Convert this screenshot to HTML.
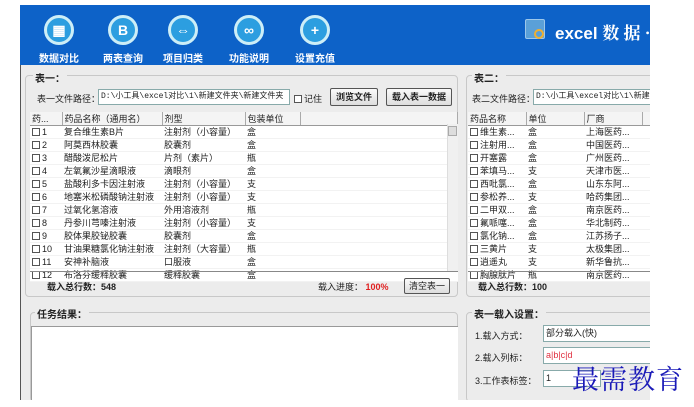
<!DOCTYPE html><html><head><meta charset="utf-8"><style>
*{margin:0;padding:0;box-sizing:border-box}
body{width:694px;height:407px;background:#fff;position:relative;overflow:hidden;font-family:"Liberation Sans","Noto Sans CJK SC",sans-serif;font-size:9px;color:#222}
.a{position:absolute}
#app{left:20px;top:5px;width:630px;height:395px;background:#ececec;border-left:1px solid #555}
#hdr{left:20px;top:5px;width:630px;height:60px;background:#0d62c8}
.ic{position:absolute;width:30px;height:30px;border-radius:50%;background:#2c9ee0;border:3px solid #cdeef7;top:10px;color:#fff;text-align:center;font:bold 14px/24px "Liberation Sans",sans-serif}
.lb{position:absolute;top:45px;color:#fff;font-size:10px;font-weight:bold;width:64px;text-align:center}
.grp{position:absolute;border:1px solid #c8c8c8;border-radius:4px}
.gt{position:absolute;background:#ececec;font-weight:bold;font-size:10px;padding:0 2px}
.inp{position:absolute;background:#fff;border:1px solid #8aa;height:16px;font:8px/14px "Liberation Mono","Noto Sans CJK SC",monospace;padding-left:2px;white-space:nowrap;overflow:hidden}
.btn{position:absolute;border:1px solid #555;background:linear-gradient(#fafafa,#ddd);font-weight:bold;font-size:9px;text-align:center;line-height:16px;height:18px;border-radius:2px}
table{border-collapse:collapse;position:absolute;background:#fff}
td{height:12.3px;line-height:12px;font-size:9px;white-space:nowrap;overflow:hidden;padding-left:2px;border-bottom:1px solid #f2f2f2}
th{height:11px;font-weight:normal;text-align:left;font-size:9px;border-right:1px solid #aaa;border-bottom:1px solid #999;padding-left:2px;background:#f4f4f4}
.cb{display:inline-block;width:8px;height:8px;border:1px solid #555;vertical-align:-1px;margin-right:2px;background:#fff}
</style></head><body>
<div id="app" class="a"></div>
<div id="hdr" class="a">
<div class="ic" style="left:24px">▦</div><div class="lb" style="left:7px">数据对比</div>
<div class="ic" style="left:88px">B</div><div class="lb" style="left:71px">两表查询</div>
<div class="ic" style="left:148px">⇔</div><div class="lb" style="left:131px">项目归类</div>
<div class="ic" style="left:214px">∞</div><div class="lb" style="left:197px">功能说明</div>
<div class="ic" style="left:280px">+</div><div class="lb" style="left:263px">设置充值</div>
<div class="a" style="left:505px;top:14px;width:20px;height:20px;background:#5aa0d8;border:1px solid #9cc7ea;border-radius:2px"></div>
<div class="a" style="left:514px;top:24px;width:10px;height:10px;border:2px solid #f0b030;border-radius:50%"></div>
<div class="a" style="left:535px;top:14px;color:#fff;font-size:17px;font-weight:bold;white-space:nowrap">excel <span style="font-family:'Noto Serif CJK SC',serif">数 据 ·</span></div>
</div>
<div class="grp" style="left:25px;top:75px;width:433px;height:222px"></div>
<div class="gt" style="left:33px;top:70px">表一：</div>
<div class="a" style="left:37px;top:92px">表一文件路径：</div>
<div class="inp" style="left:98px;top:89px;width:192px">D:\小工具\excel对比\1\新建文件夹\新建文件夹</div>
<div class="a" style="left:294px;top:92px"><span class="cb"></span>记住</div>
<div class="btn" style="left:330px;top:88px;width:48px">浏览文件</div>
<div class="btn" style="left:386px;top:88px;width:66px">载入表一数据</div>
<table style="left:30px;top:112px;width:428px">
<tr><th style="width:32px">药...</th><th style="width:100px">药品名称（通用名）</th><th style="width:83px">剂型</th><th style="width:55px">包装单位</th><th></th></tr>
<tr><td><span class="cb"></span>1</td><td>复合维生素B片</td><td>注射剂（小容量）</td><td>盒</td><td></td></tr>
<tr><td><span class="cb"></span>2</td><td>阿莫西林胶囊</td><td>胶囊剂</td><td>盒</td><td></td></tr>
<tr><td><span class="cb"></span>3</td><td>醋酸泼尼松片</td><td>片剂（素片）</td><td>瓶</td><td></td></tr>
<tr><td><span class="cb"></span>4</td><td>左氧氟沙星滴眼液</td><td>滴眼剂</td><td>盒</td><td></td></tr>
<tr><td><span class="cb"></span>5</td><td>盐酸利多卡因注射液</td><td>注射剂（小容量）</td><td>支</td><td></td></tr>
<tr><td><span class="cb"></span>6</td><td>地塞米松磷酸钠注射液</td><td>注射剂（小容量）</td><td>支</td><td></td></tr>
<tr><td><span class="cb"></span>7</td><td>过氧化氢溶液</td><td>外用溶液剂</td><td>瓶</td><td></td></tr>
<tr><td><span class="cb"></span>8</td><td>丹参川芎嗪注射液</td><td>注射剂（小容量）</td><td>支</td><td></td></tr>
<tr><td><span class="cb"></span>9</td><td>胶体果胶铋胶囊</td><td>胶囊剂</td><td>盒</td><td></td></tr>
<tr><td><span class="cb"></span>10</td><td>甘油果糖氯化钠注射液</td><td>注射剂（大容量）</td><td>瓶</td><td></td></tr>
<tr><td><span class="cb"></span>11</td><td>安神补脑液</td><td>口服液</td><td>盒</td><td></td></tr>
<tr><td><span class="cb"></span>12</td><td>布洛芬缓释胶囊</td><td>缓释胶囊</td><td>盒</td><td></td></tr>
</table>
<div class="a" style="left:447px;top:124px;width:11px;height:147px;background:#f0f0f0;border-left:1px solid #ddd"></div>
<div class="a" style="left:448px;top:126px;width:9px;height:10px;background:#ddd;border:1px solid #aaa"></div>
<div class="a" style="left:30px;top:271px;width:428px;height:1px;background:#888"></div>
<div class="a" style="left:47px;top:280px;font-weight:bold">载入总行数：548</div>
<div class="a" style="left:318px;top:280px">载入进度： <b style="color:#e02020">100%</b></div>
<div class="btn" style="left:404px;top:278px;width:46px;height:16px;line-height:14px;font-weight:normal">清空表一</div>
<div class="grp" style="left:30px;top:312px;width:428px;height:90px"></div>
<div class="gt" style="left:35px;top:306px">任务结果：</div>
<div class="a" style="left:31px;top:326px;width:427px;height:75px;background:#fff;border-top:1px solid #999;border-left:1px solid #999"></div>
<div class="grp" style="left:466px;top:75px;width:200px;height:222px"></div>
<div class="gt" style="left:472px;top:70px">表二：</div>
<div class="a" style="left:472px;top:92px">表二文件路径：</div>
<div class="inp" style="left:533px;top:89px;width:127px">D:\小工具\excel对比\1\新建文件夹</div>
<table style="left:468px;top:112px;width:192px">
<tr><th style="width:58px">药品名称</th><th style="width:58px">单位</th><th style="width:58px">厂商</th><th></th></tr>
<tr><td><span class="cb"></span>维生素...</td><td>盒</td><td>上海医药...</td><td></td></tr>
<tr><td><span class="cb"></span>注射用...</td><td>盒</td><td>中国医药...</td><td></td></tr>
<tr><td><span class="cb"></span>开塞露</td><td>盒</td><td>广州医药...</td><td></td></tr>
<tr><td><span class="cb"></span>苯填马...</td><td>支</td><td>天津市医...</td><td></td></tr>
<tr><td><span class="cb"></span>西吡氯...</td><td>盒</td><td>山东东阿...</td><td></td></tr>
<tr><td><span class="cb"></span>参松养...</td><td>支</td><td>哈药集团...</td><td></td></tr>
<tr><td><span class="cb"></span>二甲双...</td><td>盒</td><td>南京医药...</td><td></td></tr>
<tr><td><span class="cb"></span>氟哌噻...</td><td>盒</td><td>华北制药...</td><td></td></tr>
<tr><td><span class="cb"></span>氯化钠...</td><td>盒</td><td>江苏扬子...</td><td></td></tr>
<tr><td><span class="cb"></span>三黄片</td><td>支</td><td>太极集团...</td><td></td></tr>
<tr><td><span class="cb"></span>逍遥丸</td><td>支</td><td>新华鲁抗...</td><td></td></tr>
<tr><td><span class="cb"></span>胸腺肽片</td><td>瓶</td><td>南京医药...</td><td></td></tr>
</table>
<div class="a" style="left:468px;top:271px;width:192px;height:1px;background:#888"></div>
<div class="a" style="left:478px;top:280px;font-weight:bold">载入总行数：100</div>
<div class="grp" style="left:466px;top:312px;width:200px;height:90px"></div>
<div class="gt" style="left:472px;top:306px">表一载入设置：</div>
<div class="a" style="left:475px;top:329px">1.载入方式：</div>
<div class="inp" style="left:543px;top:325px;width:117px;height:17px;font-family:'Liberation Sans','Noto Sans CJK SC',sans-serif;font-size:9px;line-height:15px">部分载入(快)</div>
<div class="a" style="left:475px;top:351px">2.载入列标：</div>
<div class="inp" style="left:543px;top:347px;width:117px;height:17px;color:#e03040;font-family:'Liberation Sans',sans-serif;font-size:9px;line-height:15px">a|b|c|d</div>
<div class="a" style="left:475px;top:374px">3.工作表标签：</div>
<div class="inp" style="left:543px;top:370px;width:58px;height:17px;font-family:'Liberation Sans',sans-serif;font-size:9px;line-height:15px">1</div>
<div class="a" style="left:650px;top:0;width:44px;height:407px;background:#fff"></div>
<div class="a" style="left:20px;top:400px;width:674px;height:7px;background:#fff"></div>
<div class="a" style="left:572px;top:358px;font-family:'Noto Serif CJK SC',serif;font-size:27px;color:#1a1ab8;letter-spacing:1px;white-space:nowrap">最需教育</div>
</body></html>
